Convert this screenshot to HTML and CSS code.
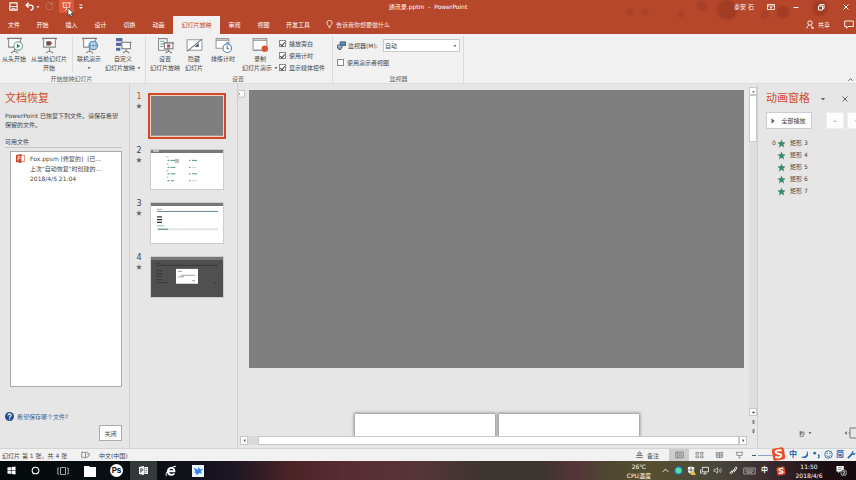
FILE: index.html
```html
<!DOCTYPE html>
<html lang="zh-CN">
<head>
<meta charset="utf-8">
<title>通讯录.pptm - PowerPoint</title>
<link rel="stylesheet" href="styles.css">
</head>
<body>
<svg class="defs" aria-hidden="true">
  <symbol id="screen" viewBox="0 0 16 16">
    <path d="M1 1.500h14" stroke="#777" stroke-width="1.500"/>
    <path d="M2.500 2v7.500h11V2" fill="#fff" stroke="#888" stroke-width="1"/>
    <path d="M8 10v4M4.500 15l3.500-2 3.500 2" fill="none" stroke="#888" stroke-width="1"/>
  </symbol>
  <symbol id="star" viewBox="0 0 10 10"><path d="M5 .5l1.300 3.100 3.300.3-2.500 2.200.8 3.300L5 7.600 2.100 9.400l.8-3.300L.4 3.900l3.300-.3z" fill="currentColor"/></symbol>
  <symbol id="cross" viewBox="0 0 8 8"><path d="M1.500 1.500l5 5m0-5l-5 5" stroke="currentColor" stroke-width="1"/></symbol>
  <symbol id="down" viewBox="0 0 6 6"><path d="M.8 2h4.400L3 4.500z" fill="currentColor"/></symbol>
  <symbol id="sogou" viewBox="0 0 16 16">
    <rect x="1.500" y="1.500" width="13" height="13" rx="2" fill="#e8502a" transform="rotate(-10 8 8)"/>
    <path d="M11.500 4.300C8 3.200 4.600 4.300 5 6.300c.4 1.900 6 1 6 3.300 0 2-3.600 2.700-6.500 1.500" fill="none" stroke="#fff" stroke-width="2"/>
  </symbol>
</svg>

<header class="top">
  <div class="titlebar">
    <div class="quick">
      <button aria-label="保存"><svg viewBox="0 0 10 10"><path d="M1 1h8v8H1z" fill="none" stroke="#fff" stroke-width="1.200"/><path d="M1 5h8M3.500 9V7h3v2" stroke="#fff" fill="none"/></svg></button>
      <button aria-label="撤消"><svg viewBox="0 0 10 10"><path d="M4 .8L1.200 3.500 4 6.200M1.500 3.500H6c4 0 4 5 0 5.500" fill="none" stroke="#fff" stroke-width="1.500"/></svg></button>
      <svg class="caret" viewBox="0 0 6 6"><use href="#down"/></svg>
      <button class="faded" aria-label="重复"><svg viewBox="0 0 10 10"><path d="M8 2a4 4 0 1 0 1 3M8.500 0v3H5.500" fill="none" stroke="#fff"/></svg></button>
      <button class="hot" aria-label="从头开始放映"><svg viewBox="0 0 10 10"><path d="M0 1h10M1.500 1v5h7V1M5 6v2.500M3 9.500l2-1.500 2 1.500" fill="none" stroke="#ffe3d8"/><path d="M4 2.500v2.500l2-1.250z" fill="#ffe3d8"/></svg></button>
      <button class="more" aria-label="自定义快速访问工具栏"><svg viewBox="0 0 6 6"><path d="M1.500 1h3" stroke="#fff"/><path d="M1 3h4L3 5z" fill="#fff"/></svg></button>
      <svg class="cursor" viewBox="0 0 8 12"><path d="M.7.800v8.700l2-1.800 1.300 3 1.500-.7-1.300-2.800h2.700z" fill="#fff" stroke="#222" stroke-width=".7"/></svg>
    </div>
    <h1 class="doc">通讯录.pptm&nbsp; -&nbsp; PowerPoint</h1>
    <div class="window">
      <span class="user">泰安 石</span>
      <button aria-label="功能区显示选项"><svg viewBox="0 0 8 8"><path d="M.5 1.500h7v5h-7zM.5 3h7M4 6V4M3 5l1-1 1 1" fill="none" stroke="#fff" stroke-width=".8"/></svg></button>
      <button aria-label="最小化"><svg viewBox="0 0 8 8"><path d="M1.500 4.500h5" stroke="#fff"/></svg></button>
      <button aria-label="还原"><svg viewBox="0 0 8 8"><path d="M1.500 3h4v4h-4zM3 3V1.500h4v4H5.500" fill="none" stroke="#fff"/></svg></button>
      <button aria-label="关闭窗口"><svg viewBox="0 0 8 8"><use href="#cross"/></svg></button>
    </div>
  </div>
  <nav class="tabs">
    <button class="first">文件</button><button>开始</button><button>插入</button><button>设计</button><button>切换</button><button>动画</button><button class="active">幻灯片放映</button><button>审阅</button><button>视图</button><button class="dev">开发工具</button>
    <button class="tell"><svg viewBox="0 0 8 10"><path d="M2.800 7C2.800 5.500 1 5 1 3.300a3 3 0 0 1 6 0C7 5 5.200 5.500 5.200 7zM3 8.700h2" fill="none" stroke="#fff" stroke-width=".9"/></svg>告诉我你想要做什么</button>
    <div class="share">
      <button><svg viewBox="0 0 8 9"><circle cx="4" cy="3" r="2.200" fill="none" stroke="#fff" stroke-width=".9"/><path d="M.8 8.500c0-2 1.200-3 2.400-3.300M5 5.300l2.200 3M5 8h3" fill="none" stroke="#fff" stroke-width=".9"/></svg>共享</button>
      <button aria-label="批注"><svg class="wide" viewBox="0 0 10 9"><path d="M.7 1h8.600v5.500H4L2.500 8.300V6.500H.7z" fill="none" stroke="#fff" stroke-width=".9"/></svg></button>
    </div>
  </nav>
</header>

<section class="ribbon" aria-label="幻灯片放映">
  <div class="group">
    <div class="tools">
      <button class="tool w28"><svg viewBox="0 0 16 16"><use href="#screen"/><circle cx="11.500" cy="8.500" r="4" fill="#fff" stroke="#6c9a84"/><path d="M10.200 6.300v4.400l3.400-2.200z" fill="#3d8a66"/></svg>从头开始</button>
      <button class="tool w42"><svg viewBox="0 0 16 16"><use href="#screen"/><path d="M5 4h4v4H5z" fill="#5b4c66"/><path d="M8 3.500l3 2.300-3 2.200z" fill="#c5452c"/></svg>从当前幻灯片<br>开始</button>
      <i class="rule"></i>
      <button class="tool w28"><svg viewBox="0 0 16 16"><use href="#screen"/><circle cx="11.500" cy="8" r="4" fill="#d5e6f4" stroke="#4d89bd"/><path d="M7.500 8h8M11.500 4v8M9.500 5c-1 2-1 4 0 6M13.500 5c1 2 1 4 0 6" fill="none" stroke="#4d89bd" stroke-width=".7"/></svg>联机演示<br><svg class="caret" viewBox="0 0 6 6"><use href="#down"/></svg></button>
      <button class="tool w40"><svg viewBox="0 0 16 16"><path d="M1 1h6v3H1zM1 5.500h5v3H1zM1 10h4v3H1z" fill="#52689e"/><path d="M5.500 5h10M6.500 5.500V11h8V5.500M10.500 11v3M7.500 15l3-1.700 3 1.700" fill="#fff" stroke="#777"/></svg>自定义<br><span>幻灯片放映 <svg class="caret" viewBox="0 0 6 6"><use href="#down"/></svg></span></button>
    </div>
    <p class="caption">开始放映幻灯片</p>
  </div>
  <div class="group">
    <div class="tools">
      <button class="tool w36"><svg viewBox="0 0 16 16"><path d="M1.500 1.500h8v11h-8z" fill="#fff" stroke="#888"/><path d="M3 4h4M3 6.500h4M3 9h3" stroke="#6ba08a"/><path d="M6 5.500h10M7 6v5h8V6M11 11v3M8 15l3-1.500 3 1.500" fill="#fff" stroke="#777"/><path d="M9.500 7h3v3h-3z" fill="#b9506c"/></svg>设置<br>幻灯片放映</button>
      <button class="tool w22"><svg viewBox="0 0 16 16"><path d="M1 2.500h14v10H1z" fill="#fff" stroke="#999"/><path d="M1 13.500L15 2" stroke="#777"/><path d="M8 9.500l4-4v4z" fill="#4d6180"/></svg>隐藏<br>幻灯片</button>
      <button class="tool w36"><svg viewBox="0 0 16 16"><path d="M1 1.500h12v9H1z" fill="#fff" stroke="#999"/><path d="M1 3h12" stroke="#888"/><circle cx="11.500" cy="10.500" r="4" fill="#fff" stroke="#4d80ad"/><path d="M11.500 8v3h2M10.500 5.500h2" fill="none" stroke="#4d80ad"/></svg>排练计时</button>
      <button class="tool w38"><svg viewBox="0 0 16 16"><path d="M1 1.500h13v11H1z" fill="#fff" stroke="#999"/><path d="M1 3h13M1 12.500h13" stroke="#888"/><circle cx="12" cy="11" r="3" fill="#dd5133"/></svg>录制<br><span>幻灯片演示 <svg class="caret" viewBox="0 0 6 6"><use href="#down"/></svg></span></button>
      <div class="checks">
        <label><input type="checkbox" checked>播放旁白</label>
        <label><input type="checkbox" checked>使用计时</label>
        <label><input type="checkbox" checked>显示媒体控件</label>
      </div>
    </div>
    <p class="caption">设置</p>
  </div>
  <div class="group monitors">
    <div class="monitor">
      <div class="field">
        <svg viewBox="0 0 10 10"><path d="M3.500 1h6v4h-6z" fill="#5b8fc0" stroke="#456"/><path d="M.5 4.500h5v3.500h-5zM1.500 9.500h3" fill="#9fc3e0" stroke="#456"/></svg>
        <label for="mon">监视器(M):</label>
        <span class="combo"><select id="mon"><option>自动</option></select><svg class="caret" viewBox="0 0 6 6"><use href="#down"/></svg></span>
      </div>
      <label><input type="checkbox">使用演示者视图</label>
    </div>
    <p class="caption">监视器</p>
  </div>
  <button class="collapse" aria-label="折叠功能区"><svg viewBox="0 0 8 8"><path d="M1.500 5.500L4 3l2.500 2.500" fill="none" stroke="#555"/></svg></button>
</section>

<main class="work">
  <aside class="recovery">
    <h2>文档恢复</h2>
    <p class="intro">PowerPoint 已恢复下列文件。请保存希望保留的文件。</p>
    <h3>可用文件</h3>
    <div class="files">
      <svg viewBox="0 0 10 10"><path d="M4 1.500h5.500v7H4z" fill="#fff" stroke="#d0684e" stroke-width=".8"/><path d="M0 1l6-1v10L0 9z" fill="#cb4427"/><path d="M2.200 7.500v-5h1c1.800 0 1.800 2.700 0 2.700h-1" fill="none" stroke="#fff" stroke-width=".9"/></svg>
      <div><p>Fox.ppsm [修复的]&nbsp; [已...</p><p>上次"自动恢复"时创建的...</p><p>2018/4/5 21:04</p></div>
    </div>
    <a class="help" href="#"><svg viewBox="0 0 10 10"><circle cx="5" cy="5" r="5" fill="#27508f"/><path d="M3.300 3.800c0-2.300 3.500-2.200 3.500-.1C6.800 5 5 4.900 5 6.300M5 7.200v1.200" fill="none" stroke="#fff" stroke-width="1.200"/></svg>希望保存哪个文件?</a>
    <button class="close">关闭</button>
  </aside>

  <ol class="slides">
    <li class="current"><div class="mark"><b>1</b><svg viewBox="0 0 10 10"><use href="#star"/></svg></div><svg class="thumb" viewBox="0 0 74 42" preserveAspectRatio="none"><path d="M0 0h74v42H0z" fill="#7f7f7f"/></svg></li>
    <li><div class="mark"><b>2</b><svg viewBox="0 0 10 10"><use href="#star"/></svg></div><svg class="thumb" viewBox="0 0 74 42" preserveAspectRatio="none"><path d="M0 0h74v42H0z" fill="#fff"/><path d="M0 0h74v4H0z" fill="#777"/><path d="M3 2h6" stroke="#fff"/><path d="M16.500 8h2M16.500 15h2M16.500 22h2M16.500 28.500h2" stroke="#aaa"/><path d="M17.500 11.500h2M17.500 18.500h2M17.500 25h2M17.500 32h2M39 11.500h1.500M39 18.500h1.500M39 25h1.500M39 32h1.500" stroke="#6a9e92" stroke-width="1.300"/><path d="M20.500 11.500h5M20.500 18.500h5M20.500 25h5M21 32h3M42 11.500h5M42 25h5" stroke="#559984"/><path d="M42 18.500h4M42 32h5" stroke="#bbb" stroke-width=".7"/><path d="M25 10h4v4h-4z" fill="#bbb"/></svg></li>
    <li><div class="mark"><b>3</b><svg viewBox="0 0 10 10"><use href="#star"/></svg></div><svg class="thumb" viewBox="0 0 74 42" preserveAspectRatio="none"><path d="M0 0h74v42H0z" fill="#fff"/><path d="M0 0h74v4H0z" fill="#777"/><path d="M7 7.500h5" stroke="#888" stroke-width=".7"/><path d="M7 9.500h61" stroke="#62849a"/><path d="M7 15h5M7 17.800h5M7 20.500h5" stroke="#333" stroke-width="1.300"/><path d="M7 24h7" stroke="#76a997" stroke-width=".8"/><path d="M7 27.500h61" stroke="#e4e4e4" stroke-width="2"/><path d="M8 27.500h10" stroke="#448d75"/></svg></li>
    <li><div class="mark"><b>4</b><svg viewBox="0 0 10 10"><use href="#star"/></svg></div><svg class="thumb" viewBox="0 0 74 42" preserveAspectRatio="none"><path d="M0 0h74v42H0z" fill="#505050"/><path d="M0 0h74v4H0z" fill="#777"/><path d="M6 7h5M6 9.500h62M6 15h6M6 18h6M6 20.500h6M6 24h7M6 27h12M64 27h2" stroke="#393939"/><path d="M26 13h22v15H26z" fill="#fff"/><path d="M28 15.500h4M31 19.500h14M28 21h6M42 25h3" stroke="#888" stroke-width=".8"/></svg></li>
  </ol>

  <section class="editor">
    <svg class="tag" viewBox="0 0 8 8"><path d="M0 0h7.500v7.500H0" fill="#fff" stroke="#bbb"/><path d="M0 2l2 2-2 2" fill="none" stroke="#777"/></svg>
    <div class="canvas">
      <div class="slide"></div>
      <div class="sheets"><div></div><div></div></div>
    </div>
    <div class="vscroll">
      <button aria-label="向上滚动"><svg viewBox="0 0 6 6"><path d="M1.200 4h3.600L3 2z" fill="#444"/></svg></button>
      <div class="thumbbar"></div>
      <button class="low" aria-label="向下滚动"><svg viewBox="0 0 6 6"><use href="#down"/></svg></button>
      <button class="step" aria-label="上一张幻灯片"><svg viewBox="0 0 6 6"><path d="M1 3l2-2 2 2zM1 5.500l2-2 2 2z" fill="#555"/></svg></button>
      <button class="step" aria-label="下一张幻灯片"><svg viewBox="0 0 6 6"><path d="M1 .5l2 2 2-2zM1 3l2 2 2-2z" fill="#555"/></svg></button>
    </div>
    <div class="hscroll">
      <button aria-label="向左滚动"><svg viewBox="0 0 6 6"><path d="M4 1v4L2 3z" fill="#444"/></svg></button>
      <div class="thumbbar"></div>
      <button aria-label="向右滚动"><svg viewBox="0 0 6 6"><path d="M2 1v4l2-2z" fill="#444"/></svg></button>
    </div>
  </section>

  <aside class="anim">
    <div class="head"><h2>动画窗格</h2><svg class="pick" viewBox="0 0 6 6"><use href="#down"/></svg><button aria-label="关闭窗格"><svg viewBox="0 0 8 8"><use href="#cross"/></svg></button></div>
    <div class="play"><button class="all"><svg viewBox="0 0 6 8"><path d="M1.500 1.200v5.600L4.800 4z" fill="#666"/></svg>全部播放</button><button class="move" aria-label="上移"><svg viewBox="0 0 6 6"><path d="M1 4h4L3 2.200z" fill="#bbb"/></svg></button><button class="move last" aria-label="下移"><svg viewBox="0 0 6 6"><path d="M1 2.200h4L3 4z" fill="#ccc"/></svg></button></div>
    <ol>
      <li><span>0</span><svg viewBox="0 0 10 10"><use href="#star"/></svg>矩形 3</li>
      <li><span></span><svg viewBox="0 0 10 10"><use href="#star"/></svg>矩形 4</li>
      <li><span></span><svg viewBox="0 0 10 10"><use href="#star"/></svg>矩形 5</li>
      <li><span></span><svg viewBox="0 0 10 10"><use href="#star"/></svg>矩形 6</li>
      <li><span></span><svg viewBox="0 0 10 10"><use href="#star"/></svg>矩形 7</li>
    </ol>
    <div class="foot"><button>秒 <svg class="caret" viewBox="0 0 6 6"><use href="#down"/></svg></button><svg class="zoomer" viewBox="0 0 12 12"><path d="M3 4v4L.5 6z" fill="#777"/><path d="M12 1H6v10h6M6 6h-1.500" fill="none" stroke="#777"/></svg></div>
  </aside>
</main>

<footer class="status">
  <span class="count">幻灯片 第 1 张，共 4 张</span>
  <svg class="book" viewBox="0 0 10 8"><path d="M5 1.500C3.500.8 2 .8.800 1v5.500c1.500 0 3 0 4.200.7V1.500c1-.6 1.700-.7 2.700-.5M5 7l1.500-.5M7 3.500l2-1.500v3L6.500 6.500" fill="none" stroke="#666" stroke-width=".8"/></svg>
  <span>中文(中国)</span>
  <div class="views">
    <button class="notes"><svg viewBox="0 0 8 8"><path d="M4 .5l2 2.500H2zM.8 4.500h6.400M.8 6.500h6.400" fill="none" stroke="#666" stroke-width=".9"/></svg>备注</button>
    <button class="on" aria-label="普通视图"><svg viewBox="0 0 10 8"><path d="M.8.800h8.400v6.400H.8zM3 1v6M4 3h4M4 5h4" fill="none" stroke="#777" stroke-width=".9"/></svg></button>
    <button aria-label="幻灯片浏览"><svg viewBox="0 0 10 8"><path d="M1 1h3v2H1zM6 1h3v2H6zM1 5h3v2H1zM6 5h3v2H6z" fill="none" stroke="#777" stroke-width=".8"/></svg></button>
    <button aria-label="阅读视图"><svg viewBox="0 0 10 8"><path d="M5 1.500L1.500 1v5.500L5 7l3.500-.5V1zM5 1.500V7M3 3v2M7 3v2" fill="#ccc" stroke="#777" stroke-width=".8"/></svg></button>
    <button aria-label="幻灯片放映视图"><svg viewBox="0 0 10 8"><path d="M1 1h8M2 1v3.500h6V1M5 4.500v2M3.500 7.200h3" fill="none" stroke="#777" stroke-width=".8"/></svg></button>
    <span class="minus"></span><span class="track"></span>
  </div>
  <div class="ime">
    <svg class="logo" viewBox="0 0 16 16"><use href="#sogou"/></svg>
    <b>中</b>
    <svg viewBox="0 0 10 10"><path d="M7.500 1c1 5-2.500 7-6.500 6.500 2.500 2.500 7 1.500 7.800-1.500C9.300 4 8.800 2 7.500 1z" fill="#2468b2"/></svg>
    <svg viewBox="0 0 10 10"><circle cx="3" cy="3.500" r="1.500" fill="#2468b2"/><path d="M6.500 5.500c2 0 2 2.500 0 3.500" fill="none" stroke="#2468b2" stroke-width="1.500"/></svg>
    <svg viewBox="0 0 10 10"><circle cx="5" cy="5" r="4.200" fill="none" stroke="#2468b2"/><path d="M3.500 3v1.500M6.500 3v1.500M2.800 6c1 1.800 3.400 1.800 4.400 0" fill="none" stroke="#2468b2"/></svg>
    <b>简</b>
    <svg viewBox="0 0 10 10"><path d="M1 9l5-5" stroke="#2468b2" stroke-width="2"/><path d="M7.500.8C5 1 4.800 4 6 5s3.500.5 3.500-2L7.500 4 6.500 3z" fill="#2468b2"/></svg>
  </div>
</footer>

<nav class="taskbar" aria-label="任务栏">
  <button aria-label="开始菜单"><svg viewBox="0 0 10 10"><path d="M.5 1.700l3.800-.5v3.500H.5zM5 1.100L9.500.5v4.200H5zM.5 5.400h3.800v3.500l-3.800-.5zM5 5.400h4.500v4.100L5 9z" fill="#fff"/></svg></button>
  <button aria-label="Cortana"><svg viewBox="0 0 10 10"><circle cx="5" cy="5" r="3.700" fill="none" stroke="#fff" stroke-width="1.200"/></svg></button>
  <button aria-label="任务视图"><svg class="big" viewBox="0 0 12 10"><path d="M3.500 1.500h5v7h-5zM2 2H.8v6H2M10 2h1.200v6H10" fill="none" stroke="#bbb" stroke-width=".9"/></svg></button>
  <button aria-label="文件资源管理器"><svg class="big" viewBox="0 0 12 12"><path d="M0 1h5l1 1h6v10H0z" fill="#fff"/></svg></button>
  <button class="ps" aria-label="Photoshop"><span>Ps</span></button>
  <button class="open" aria-label="PowerPoint"><svg viewBox="0 0 10 10"><path d="M0 1l5.500-1v10L0 9zM6 1h4v8H6z" fill="#fff"/><path d="M2 7.500V3h1c1.700 0 1.700 2.500 0 2.500H2" fill="none" stroke="#333"/><path d="M7 3h2M7 5h2M7 7h2" stroke="#777"/></svg></button>
  <button aria-label="Internet Explorer"><svg class="big" viewBox="0 0 12 12"><path d="M2.600 6.200h6.800C9.600 1.800 3.200 1.500 2.900 6.500c0 4 5.200 4.200 6.300 1.800" fill="none" stroke="#fff" stroke-width="1.900"/><path d="M1.800 11C-.8 9.500 4 2 11 1.200" fill="none" stroke="#fff" stroke-width="1"/></svg></button>
  <button aria-label="迅雷"><svg class="big" viewBox="0 0 12 12"><path d="M0 0h12v12H0z" fill="#eef5fe"/><path d="M1.500 2.500l4.300 2.300 1-2.800 1.400 2.500 3-.5-2.400 2.500 1.200 2-3-.4L5 10.500 4 8 2 7l1.500-.5z" fill="#3582e8"/></svg></button>
  <div class="tray">
    <span class="temp">26℃<br>CPU温度</span>
    <svg viewBox="0 0 10 10"><path d="M2 6.500l3-3 3 3" fill="none" stroke="#fff"/></svg>
    <svg viewBox="0 0 10 10"><circle cx="5" cy="5" r="4" fill="#56e29a" stroke="#2276d2" stroke-width="1.500"/></svg>
    <svg viewBox="0 0 10 10"><path d="M1 1.500l3.500-1 3.500 1V5c0 2-1.500 3.500-3.500 4C2.500 8.500 1 7 1 5z" fill="#fff"/><path d="M4.500 1v8M1 4.500h7" stroke="#444" stroke-width=".8"/><path d="M7 5l3 5H4z" fill="#f0c52c"/></svg>
    <svg viewBox="0 0 10 10"><path d="M2.500 1.500h7v5h-7zM5.500 6.500v2M3.500 8.800h4M.5 4v4h2" fill="none" stroke="#fff" stroke-width=".9"/></svg>
    <svg viewBox="0 0 10 10"><path d="M1 4h1.500L5 2v6L2.500 6H1zM6.500 3.500c1 1 1 2 0 3M8 2.500c1.500 1.500 1.500 3.500 0 5" fill="none" stroke="#ccc" stroke-width=".9"/></svg>
    <svg class="pen" viewBox="0 0 10 10"><path d="M1 7.500c1.500-2.500 3-2 3-.5S1.500 9 1.500 7.500C2 6 5 6 8 3.500M4 6l3.500-5 1.500 1L5.500 7" fill="none" stroke="#fff" stroke-width=".9"/></svg>
    <svg class="keys" viewBox="0 0 14 8"><path d="M.8.800h12.400v6.400H.8zM2.500 2.800h9M2.500 4.200h9M4 5.800h6" fill="none" stroke="#bbb" stroke-width=".8"/></svg>
    <b>中</b>
    <svg class="sg" viewBox="0 0 16 16"><use href="#sogou"/></svg>
    <span class="clock">11:50<br>2018/4/6</span>
    <svg class="note" viewBox="0 0 12 12"><path d="M.5 1h8v6H4L2.500 9V7h-2z" fill="#fff"/><path d="M2 3h5M2 5h4" stroke="#555" stroke-width=".7"/><circle cx="8.500" cy="8.500" r="3.300" fill="#333" stroke="#ddd" stroke-width=".6"/><path d="M7.500 7.600c.3-1 2-.9 2 .1 0 .7-1 1.200-2 2.200h2.200" fill="none" stroke="#fff" stroke-width=".7"/></svg>
  </div>
</nav>
</body>
</html>
```

FILE: styles.css
```css
* { box-sizing: border-box; }
body, h1, h2, h3, p, ol { margin: 0; padding: 0; font-weight: 400; }
ol { list-style: none; }
body {
  display: grid;
  grid-template-rows: 34px 50px 1fr 13px 19px;
  min-height: 100vh;
  overflow: hidden;
  background: #e6e6e6;
  color: #444;
  font: 6px/9px "DejaVu Sans", "Noto Sans CJK SC", sans-serif;
}
button, select, input { font: inherit; color: inherit; margin: 0; padding: 0; border: 0; background: none; }
button { white-space: nowrap; display: flex; align-items: center; justify-content: center; }
svg { display: block; flex: none; }
a { color: inherit; text-decoration: none; }
.defs { position: absolute; width: 0; height: 0; }
.caret { width: 4px; height: 4px; display: inline-block; }

/* title bar and tabs */
.top {
  color: #fff;
  background:
    radial-gradient(circle at 727px 10px, #a23c23 8px, transparent 12px),
    radial-gradient(circle at 702px 6px, #a94027 4px, transparent 7px),
    radial-gradient(circle at 783px 12px, #a23c23 5px, transparent 8px),
    radial-gradient(circle at 765px 15px, #a94027 3px, transparent 6px),
    radial-gradient(circle at 681px 14px, #a94027 2px, transparent 5px),
    radial-gradient(circle at 645px 12px, #a94027 2px, transparent 5px),
    radial-gradient(circle at 630px 12px, #a94027 2px, transparent 5px),
    radial-gradient(circle at 820px 8px, #a23c23 6px, transparent 10px),
    #b7472a;
}
.titlebar { display: grid; grid-template-columns: 1fr auto 1fr; align-items: center; height: 16px; padding-bottom: 3px; }
.doc { font-size: 6px; }
.quick { position: relative; display: flex; align-items: center; padding-left: 9px; gap: 7px; }
.quick svg { width: 9px; height: 9px; }
.quick .caret { width: 4px; height: 4px; margin-left: -5px; }
.quick .faded { opacity: .25; margin-left: -2px; }
.quick .hot { width: 15px; height: 13px; margin-left: -2px; background: #e0583a; }
.quick .more { margin-left: -3px; }
.quick .more svg { width: 6px; height: 6px; }
.quick .cursor { position: absolute; left: 67px; top: 7px; width: 8px; height: 11px; z-index: 2; }
.window { display: flex; align-items: center; justify-content: flex-end; gap: 17px; padding-right: 6px; }
.window svg { width: 8px; height: 8px; }
.user { margin-right: -4px; }
.tabs { display: flex; height: 18px; }
.tabs button { width: 29px; padding-bottom: 2px; }
.tabs .first { width: 28px; }
.tabs .active { width: 47px; background: #f1f1f1; color: #c43e1c; }
.tabs .dev { width: 40px; }
.tabs .tell { width: auto; margin-left: 8px; gap: 3px; color: #fbe4dc; }
.tell svg { width: 7px; height: 9px; }
.share { display: flex; gap: 14px; margin-left: auto; padding-right: 2px; }
.tabs .share button { width: auto; gap: 4px; }
.share svg { width: 8px; height: 9px; }
.share .wide { width: 10px; }

/* ribbon */
.ribbon { display: flex; background: #f1f1f1; border-bottom: 1px solid #dcdcdc; line-height: 9px; padding: 2px 0 0; }
.group { display: flex; flex-direction: column; justify-content: space-between; border-right: 1px solid #d9d9d9; padding: 1px 2px 0 0; }
.group + .group { padding: 1px 3px 0 1px; }
.tools { display: flex; align-items: flex-start; }
.tool { display: block; text-align: center; line-height: 9px; }
.tool > svg:first-child { width: 17px; height: 17px; margin: 0 auto; }
.tool span { display: flex; align-items: center; justify-content: center; gap: 2px; }
.w22 { width: 22px; }
.w28 { width: 28px; }
.w36 { width: 36px; }
.w38 { width: 38px; }
.w40 { width: 40px; }
.w42 { width: 42px; }
.rule { align-self: stretch; width: 1px; margin: 0 2px; background: #ddd; }
.caption { text-align: center; color: #666; }
.checks { width: 50px; }
.ribbon label { display: flex; align-items: center; gap: 3px; white-space: nowrap; }
.checks label { height: 12px; }
input[type="checkbox"] { appearance: none; width: 7px; height: 7px; border: 1px solid #888; background: #fff; display: grid; place-items: center; }
input:checked::after { content: ""; width: 2px; height: 4px; border: solid #444; border-width: 0 1px 1px 0; rotate: 40deg; }
.group.monitors { width: 131px; padding-left: 4px; }
.monitor { display: grid; gap: 6px; padding-top: 2px; }
.field { display: flex; align-items: center; gap: 2px; }
.field > svg { width: 9px; height: 9px; }
.field label { width: 33px; }
.combo { display: flex; align-items: center; flex: 1; height: 13px; padding-right: 2px; background: #fff; border: 1px solid #c8c8c8; }
.combo select { appearance: none; flex: 1; height: 100%; padding-left: 1px; outline: 0; }
.collapse { align-self: flex-end; margin-left: auto; padding-right: 2px; }
.collapse svg { width: 7px; height: 7px; }

/* work area */
.work { display: grid; grid-template-columns: 130px 108px 1fr 98px; min-height: 0; }
h2 { font-size: 11px; line-height: 14px; color: #d24a2c; }
.recovery { display: flex; flex-direction: column; padding: 8px 7px 7px 5px; border-right: 1px solid #cfcfcf; }
.intro { margin-top: 5px; padding-right: 3px; }
h3 { margin-top: 8px; padding-bottom: 1px; font-size: 6px; border-bottom: 1px solid #c6c6c6; }
.files { flex: 1; display: flex; gap: 5px; margin: 3px 0 25px 5px; padding: 2px 5px; background: #fff; border: 1px solid #ababab; line-height: 10px; white-space: nowrap; }
.files svg { width: 9px; height: 9px; }
.help { display: flex; align-items: center; gap: 3px; color: #3a6391; }
.help svg { width: 9px; height: 9px; }
.close { align-self: flex-end; width: 23px; height: 16px; margin-top: 4px; background: #fdfdfd; border: 1px solid #ababab; }

.slides { display: flex; flex-direction: column; gap: 12px; padding: 11px 13px 0 5px; border-right: 1px solid #cfcfcf; }
.slides li { display: grid; grid-template-columns: 15px 1fr; }
.mark b { display: block; width: 8px; font-size: 8px; line-height: 8px; font-weight: 400; text-align: center; margin-top: -2px; }
.mark svg { width: 6px; height: 6px; margin: 2px 0 0 1px; color: #666; }
.current b { color: #d24a2c; }
.thumb { width: 100%; aspect-ratio: 16 / 9; outline: 1px solid #ccc; outline-offset: -1px; }
.current .thumb { outline: 2px solid #d24a2c; outline-offset: 0; border: 1px solid #f3d0c6; }

.editor { position: relative; display: grid; grid-template: 1fr 9px / 1fr 8px; padding-bottom: 3px; border-right: 1px solid #cfcfcf; min-height: 0; }
.tag { position: absolute; left: 0; top: 6px; width: 7px; height: 8px; }
.canvas { display: flex; flex-direction: column; padding: 6px 5px 0 11px; min-height: 0; overflow: hidden; }
.slide { aspect-ratio: 16 / 9; background: #7f7f7f; }
.sheets { display: flex; justify-content: center; gap: 4px; margin-top: auto; }
.sheets div { width: 140px; height: 22px; background: #fff; box-shadow: 0 0 3px 1px #888; }
.vscroll { display: flex; flex-direction: column; margin-top: 3px; background: #dedede; }
.vscroll button, .hscroll button { background: #fff; border: 1px solid #c8c8c8; width: 8px; height: 8px; }
.editor button svg { width: 5px; height: 5px; }
.thumbbar { background: #fff; border: 1px solid #c8c8c8; }
.vscroll .thumbbar { height: 47px; }
.vscroll .low { margin-top: auto; }
.vscroll .step { height: 10px; background: #e6e6e6; border: 0; }
.hscroll { grid-column: 1 / -1; display: flex; margin: 0 10px 0 2px; background: #d9d9d9; }
.hscroll .thumbbar { flex: 1; margin-left: 10px; }
.hscroll button { height: 9px; }

.anim { display: flex; flex-direction: column; padding: 8px 0 9px 8px; overflow: hidden; }
.head { display: flex; align-items: center; }
.pick { width: 6px; height: 6px; margin-left: 10px; color: #666; }
.head button { margin: 0 7px 0 auto; color: #666; }
.head button svg { width: 8px; height: 8px; }
.play { display: flex; margin-top: 6px; }
.play button { height: 17px; background: #fdfdfd; border: 1px solid #ccc; flex: none; }
.play .all { width: 46px; gap: 5px; padding-right: 2px; }
.all svg { width: 6px; height: 8px; }
.play .move { width: 18px; margin-left: 14px; border-color: #eee; }
.play .last { margin-left: 3px; }
.move svg { width: 6px; height: 6px; }
.anim ol { margin-top: 8px; line-height: 12px; }
.anim li { display: flex; align-items: center; gap: 4px; padding-left: 6px; }
.anim li span { width: 4px; }
.anim li svg { width: 9px; height: 9px; margin-left: -3px; color: #3a8a6b; }
.foot { display: flex; align-items: center; justify-content: flex-end; gap: 32px; margin-top: auto; }
.foot button { gap: 3px; }
.zoomer { width: 12px; height: 12px; }

/* status bar */
.status { position: relative; display: flex; align-items: center; background: #f1f1f1; border-top: 1px solid #d4d4d4; padding-left: 2px; }
.count { width: 79px; }
.book { width: 9px; height: 8px; margin-right: 9px; }
.views { display: flex; align-items: center; align-self: stretch; margin-left: auto; padding-right: 84px; }
.views button { width: 20px; height: 100%; }
.views .notes { width: auto; gap: 3px; margin-right: 10px; }
.views svg { width: 9px; height: 8px; }
.views .on { background: #cdcdcd; }
.minus { width: 4px; height: 1px; margin: 0 2px 0 3px; background: #555; }
.track { width: 14px; height: 1px; background: #8ba2bd; }
.ime { position: absolute; right: 0; top: -3px; display: flex; align-items: center; gap: 3px; height: 16px; color: #2468b2; }
.ime svg { width: 9px; height: 9px; }
.ime b { font-size: 8px; font-weight: 700; }
.ime .logo { width: 15px; height: 16px; }

/* taskbar */
.taskbar {
  display: flex;
  color: #fff;
  background: linear-gradient(90deg, #030a0b 0, #090f14 18%, #1c1523 27%, #4b2426 34%, #582b35 40%, #563539 49%, #3b3430 57%, #3b3430 63%, #55343a 67%, #4e4732 71%, #57502f 76%, #48463b 84%, #3b2930 90%, #1d1014 96%, #14090d 100%);
}
.taskbar button { width: 27px; }
.taskbar button:first-child { width: 22px; }
.taskbar svg { width: 9px; height: 9px; }
.taskbar .big { width: 12px; height: 12px; }
.taskbar .open { background: #33383b; }
.ps span { width: 13px; height: 13px; border-radius: 50%; background: #fff; color: #111; font: 700 8px/13px Inter, sans-serif; }
.tray { display: flex; align-items: center; gap: 4px; margin-left: auto; padding-right: 9px; text-align: center; }
.temp { margin-right: 6px; white-space: nowrap; }
.tray .pen { margin-left: 3px; }
.tray .keys { width: 13px; height: 8px; margin: 0 1px; }
.tray b { font-size: 7px; }
.tray .sg { width: 10px; height: 10px; margin-left: 4px; }
.clock { width: 30px; margin: 0 8px 0 4px; white-space: nowrap; }
.tray .note { width: 11px; height: 11px; }
```
